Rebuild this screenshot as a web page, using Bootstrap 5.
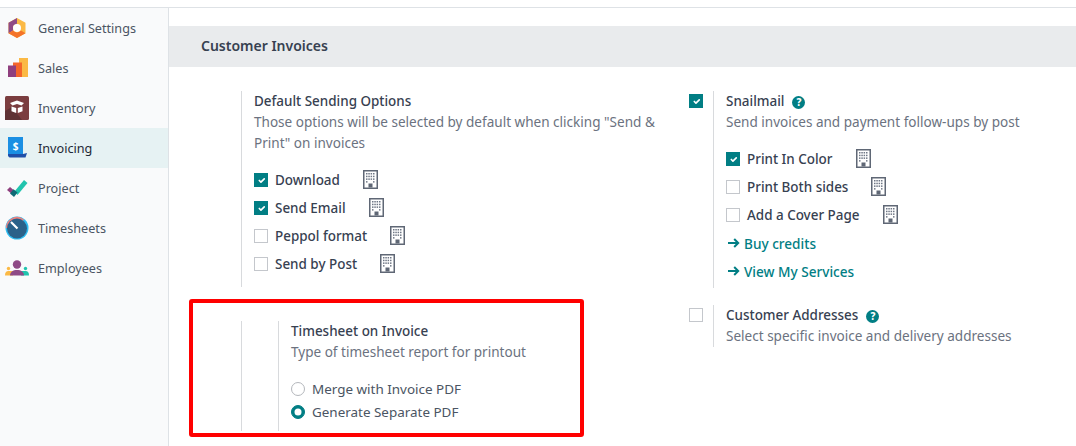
<!DOCTYPE html>
<html lang="en">
<head>
<meta charset="utf-8">
<title>Customer Invoices settings</title>
<link href="https://cdn.jsdelivr.net/npm/bootstrap@5.3.0/dist/css/bootstrap.min.css" rel="stylesheet">
<style>
html, body { height: 100%; overflow: hidden; background: #fff; }
body { font-family: "Noto Sans", "Liberation Sans", sans-serif; font-size: 13.45px; line-height: 21px; color: #374151; }
.app-frame { height: 100%; padding-top: 7px; }
.app-inner { height: 100%; border-top: 1px solid #dee2e6; }
.side-pane { width: 169px; flex: none; background: #f9fafb; border-right: 1px solid #dee2e6; }
.side-item { height: 40px; padding-left: 5px; gap: 9px; font-size: 12.65px; color: #4b5563; }
.side-item.is-active { background: #e6f2f3; color: #1f2937; }
.side-ico { width: 24px; height: 24px; flex: none; display: block; }
.main-pane { position: relative; min-width: 0; padding-top: 18px; }
.band { height: 41px; background: #e9ebed; padding-left: 32px; font-size: 14px; font-weight: 600; color: #374151; line-height: 39px; }
.col-left { width: 496px; flex: none; padding-top: 24px; }
.col-right { flex: 1 1 auto; min-width: 0; padding-top: 24px; }
.setting { display: flex; }
.pane-a { flex: none; display: flex; justify-content: flex-end; }
.col-left .pane-a { width: 72px; }
.col-right .pane-a { width: 48px; padding-right: 10px; }
.pane-b { border-left: 1px solid #d8dadd; padding-left: 12px; min-width: 0; flex: 1 1 auto; }
.s-title { font-weight: 500; color: #374151; }
.s-muted { color: #6b7280; font-size: 13.55px; }
.opt { height: 28px; gap: 7px; font-weight: 500; }
.opt-rad { height: 23px; gap: 7px; color: #4b5563; }
.opt-rad > span { position: relative; top: 1px; }
.form-check-input.tick { width: 14px; height: 14px; margin: 0; flex: none; border-radius: 0; border: 1px solid #c4c7cc; background-size: 11px; }
.form-check-input.tick:checked, .form-check-input.dot:checked { background-color: #017e84; border-color: #017e84; }
.form-check-input.dot { width: 14px; height: 14px; margin: 0; flex: none; border: 1px solid #b4b7bc; }
.form-check-input.dot:checked { background-size: 14px; }
.tick-top { margin-top: 3px !important; }
.bldg { width: 15px; height: 19px; flex: none; margin-left: 16px; margin-top: -2px; display: block; }
.qmark { display: inline-block; width: 13px; height: 13px; margin-left: 8px; border-radius: 50%; background: #017e84; color: #fff; font-size: 10px; line-height: 13px; text-align: center; font-weight: 800; vertical-align: 0; }
.go-link { height: 28px; gap: 4px; color: #017e84; font-size: 13.6px; font-weight: 500; text-decoration: none; }
.go-arrow { margin-left: 2px; }
.nested-a { width: 36px; flex: none; }
.hl-box { position: absolute; left: 20px; top: 291px; width: 395px; height: 138px; border: 4px solid #f00; border-radius: 3px; pointer-events: none; }
</style>
</head>
<body>
<svg width="0" height="0" class="position-absolute">
  <defs>
    <symbol id="bldg" viewBox="0 0 15 19">
      <rect x=".75" y=".75" width="13.5" height="17.5" fill="#fff" stroke="#5f6775" stroke-width="1.5"/>
      <g fill="#6f7785">
        <rect x="3" y="3" width="1.5" height="1.5"/><rect x="5.300" y="3" width="1.5" height="1.5"/><rect x="7.600" y="3" width="1.5" height="1.5"/><rect x="10" y="3" width="1.5" height="1.5"/>
        <rect x="3" y="5.700" width="1.5" height="1.5"/><rect x="5.300" y="5.700" width="1.5" height="1.5"/><rect x="7.600" y="5.700" width="1.5" height="1.5"/><rect x="10" y="5.700" width="1.5" height="1.5"/>
        <rect x="3" y="8.400" width="1.5" height="1.5"/><rect x="5.300" y="8.400" width="1.5" height="1.5"/><rect x="7.600" y="8.400" width="1.5" height="1.5"/><rect x="10" y="8.400" width="1.5" height="1.5"/>
        <rect x="3" y="11.100" width="1.5" height="1.5"/><rect x="10" y="11.100" width="1.5" height="1.5"/>
      </g>
      <rect x="5.500" y="13.500" width="4" height="4" fill="#5f6775"/>
    </symbol>
    <symbol id="arrow" viewBox="0 0 12 10">
      <path d="M0 5h9.500M6.200 1l4 4-4 4" fill="none" stroke="#017e84" stroke-width="2"/>
    </symbol>
  </defs>
</svg>
<div class="app-frame">
  <div class="app-inner d-flex">
    <nav class="side-pane">
      <div class="side-item d-flex align-items-center">
        <svg class="side-ico" viewBox="0 0 24 24"><path d="M12 2l8.500 4.800v10.400L12 22l-8.500-4.800V6.800z" fill="#fbb945"/><path d="M3.500 6.800L12 2v5.500L8 10v4.500l-4.500 2.700z" fill="#8f4a86"/><path d="M3.500 17.200L8 14.500l4 2.300 4-2.300 4.500 2.700L12 22z" fill="#f4732a"/><circle cx="12" cy="12" r="4" fill="#fff"/></svg>
        <span>General Settings</span>
      </div>
      <div class="side-item d-flex align-items-center">
        <svg class="side-ico" viewBox="0 0 24 24"><rect x="14" y="2" width="9" height="19" fill="#fbb945"/><rect x="8" y="6.500" width="9" height="14.500" fill="#f4652a"/><rect x="3" y="9.500" width="8" height="11.500" fill="#8f3f7e"/></svg>
        <span>Sales</span>
      </div>
      <div class="side-item d-flex align-items-center">
        <svg class="side-ico" viewBox="0 0 24 24"><rect width="24" height="24" rx="1.500" fill="#7b3d3f"/><path d="M0 24V15l7-4 10 13z" fill="#5f3234"/><path d="M5 7l7-2.500L19 7l-2.500 2.500L12 8 7.500 9.500z" fill="#fff"/><path d="M6.500 10.500l4.700 1.500v5l-4.700-1.800zM17.500 10.500L12.800 12v5l4.700-1.800z" fill="#fff"/></svg>
        <span>Inventory</span>
      </div>
      <div class="side-item is-active d-flex align-items-center">
        <svg class="side-ico" viewBox="0 0 24 24"><path d="M3 1h15v19H3z" fill="#1a8fe3"/><path d="M3 18h15l4-1-1.500 4.500H5c-1.500 0-2-1.500-2-3.500z" fill="#1f4fa8"/><text x="10.500" y="14" text-anchor="middle" font-size="10" font-weight="700" fill="#fff" font-family="Noto Sans, sans-serif">$</text></svg>
        <span>Invoicing</span>
      </div>
      <div class="side-item d-flex align-items-center">
        <svg class="side-ico" viewBox="0 0 24 24"><path d="M9.500 15.500L19 4l3.500 3-10 12z" fill="#21c4ae"/><path d="M2 14l3-3 6 5-3 3z" fill="#8f3f7e"/><path d="M8.500 13.300l4 3.200-3.500 4.500-4-3.500z" fill="#0f6a75"/></svg>
        <span>Project</span>
      </div>
      <div class="side-item d-flex align-items-center">
        <svg class="side-ico" viewBox="0 0 24 24"><circle cx="12" cy="12" r="11.500" fill="#2ebcf0"/><path d="M1 12A11 11 0 0 1 19 3.500L12 12z" fill="#f0817e"/><circle cx="12" cy="12.500" r="10" fill="#2a6189"/><path d="M6 6l6.500 6.500" stroke="#fff" stroke-width="2.200"/></svg>
        <span>Timesheets</span>
      </div>
      <div class="side-item d-flex align-items-center">
        <svg class="side-ico" viewBox="0 0 24 24"><circle cx="12" cy="8.500" r="4.200" fill="#8f4a86"/><circle cx="3.500" cy="12.500" r="1.700" fill="#fbb945"/><circle cx="20.500" cy="12.500" r="1.700" fill="#21c4ae"/><path d="M0 19.500c0-3 1-4.500 3.500-4.500H8v4.500z" fill="#fbb945"/><path d="M24 19.500c0-3-1-4.500-3.500-4.500H16v4.500z" fill="#21c4ae"/><path d="M5 19.500c0-3.500 3-5.500 7-5.500s7 2 7 5.500z" fill="#8f4a86"/></svg>
        <span>Employees</span>
      </div>
    </nav>
    <main class="main-pane flex-grow-1">
      <div class="band">Customer Invoices</div>
      <div class="d-flex">
        <div class="col-left">
          <div class="setting">
            <div class="pane-a"></div>
            <div class="pane-b" style="height:196px">
              <div class="s-title">Default Sending Options</div>
              <div class="s-muted">Those options will be selected by default when clicking "Send &amp; Print" on invoices</div>
              <div class="mt-2 pt-1">
                <label class="opt d-flex align-items-center"><input class="form-check-input tick" type="checkbox" checked><span>Download</span><svg class="bldg"><use href="#bldg"/></svg></label>
                <label class="opt d-flex align-items-center"><input class="form-check-input tick" type="checkbox" checked><span>Send Email</span><svg class="bldg"><use href="#bldg"/></svg></label>
                <label class="opt d-flex align-items-center"><input class="form-check-input tick" type="checkbox"><span>Peppol format</span><svg class="bldg"><use href="#bldg"/></svg></label>
                <label class="opt d-flex align-items-center"><input class="form-check-input tick" type="checkbox"><span>Send by Post</span><svg class="bldg"><use href="#bldg"/></svg></label>
              </div>
            </div>
          </div>
          <div class="setting">
            <div class="pane-a"></div>
            <div class="pane-b d-flex p-0" style="height:110px;margin-top:34px">
              <div class="nested-a"></div>
              <div class="pane-b">
                <div class="s-title">Timesheet on Invoice</div>
                <div class="s-muted">Type of timesheet report for printout</div>
                <div style="margin-top:14px">
                  <label class="opt-rad d-flex align-items-center"><input class="form-check-input dot" type="radio" name="ts"><span>Merge with Invoice PDF</span></label>
                  <label class="opt-rad d-flex align-items-center"><input class="form-check-input dot" type="radio" name="ts" checked><span>Generate Separate PDF</span></label>
                </div>
              </div>
            </div>
          </div>
        </div>
        <div class="col-right">
          <div class="setting">
            <div class="pane-a"><input class="form-check-input tick tick-top" type="checkbox" checked></div>
            <div class="pane-b" style="height:197px">
              <div class="s-title">Snailmail<span class="qmark">?</span></div>
              <div class="s-muted">Send invoices and payment follow-ups by post</div>
              <div class="mt-2 pt-1">
                <label class="opt d-flex align-items-center"><input class="form-check-input tick" type="checkbox" checked><span>Print In Color</span><svg class="bldg"><use href="#bldg"/></svg></label>
                <label class="opt d-flex align-items-center"><input class="form-check-input tick" type="checkbox"><span>Print Both sides</span><svg class="bldg"><use href="#bldg"/></svg></label>
                <label class="opt d-flex align-items-center"><input class="form-check-input tick" type="checkbox"><span>Add a Cover Page</span><svg class="bldg"><use href="#bldg"/></svg></label>
              </div>
              <a class="go-link d-flex align-items-center" href="#"><svg width="12" height="10" class="go-arrow"><use href="#arrow"/></svg><span>Buy credits</span></a>
              <a class="go-link d-flex align-items-center" href="#"><svg width="12" height="10" class="go-arrow"><use href="#arrow"/></svg><span>View My Services</span></a>
            </div>
          </div>
          <div class="setting" style="margin-top:17px">
            <div class="pane-a"><input class="form-check-input tick tick-top" type="checkbox"></div>
            <div class="pane-b" style="height:42px">
              <div class="s-title">Customer Addresses<span class="qmark">?</span></div>
              <div class="s-muted">Select specific invoice and delivery addresses</div>
            </div>
          </div>
        </div>
      </div>
      <div class="hl-box"></div>
    </main>
  </div>
</div>
<script src="https://cdn.jsdelivr.net/npm/bootstrap@5.3.0/dist/js/bootstrap.bundle.min.js"></script>
</body>
</html>
